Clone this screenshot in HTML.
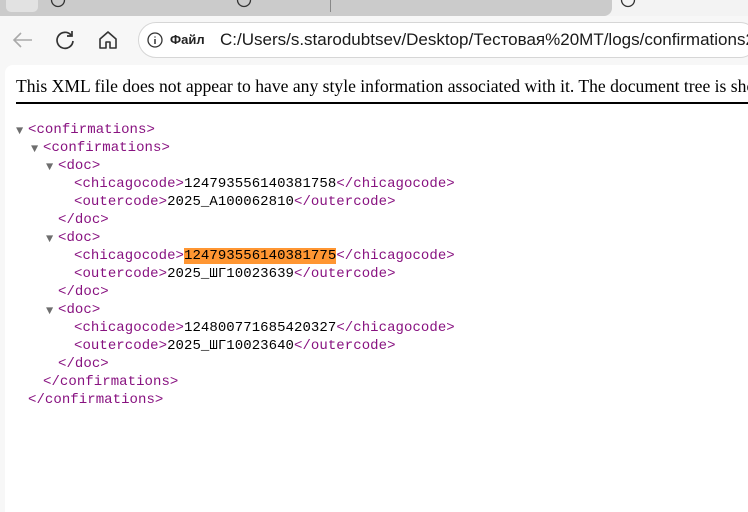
<!DOCTYPE html>
<html><head><meta charset="utf-8"><style>
*{margin:0;padding:0;box-sizing:border-box}
html,body{width:748px;height:512px;overflow:hidden}
body{background:#f7f7f7;font-family:"Liberation Sans","Noto Sans CJK SC",sans-serif;position:relative}
#wrap{position:absolute;left:0;top:0;width:748px;height:512px;overflow:hidden}
.strip{position:absolute;left:0;top:0;width:748px;height:16px;background:#f3f3f3}
.gray{position:absolute;left:0;top:0;width:612px;height:16px;background:#cbcbcb;border-radius:0 0 8px 0}
.small{position:absolute;left:6px;top:0;width:32px;height:12px;background:#e2e2e2;border-radius:0 0 5px 5px}
.addr{position:absolute;left:138px;top:22px;width:620px;height:36px;background:#fff;border:1px solid #d6d6d6;border-radius:18px}
.url{position:absolute;left:220px;top:30px;font-size:17px;color:#1a1a1a;white-space:nowrap}
.file{position:absolute;left:170px;top:32px;font-size:13px;color:#222;font-weight:bold}
.content{position:absolute;left:5px;top:65px;width:743px;height:447px;background:#fff;border-radius:8px 0 0 0}
.hdr{position:absolute;left:16px;top:76px;width:732px;overflow:hidden;font-family:"Liberation Serif",serif;font-size:17.6px;white-space:nowrap;color:#000}
.rule{position:absolute;left:16px;top:102px;width:732px;height:2px;background:#000}
.xml{position:absolute;left:0;top:121px;width:748px;font-family:"Liberation Mono",monospace;font-size:14px;letter-spacing:0.06px;line-height:18px;color:#000}
.l{position:relative;height:18px;white-space:pre}
.l>span{position:absolute;top:0}
.t{color:#881280}
.l>.tri{color:#6e6e6e;font-size:12px;top:1px}
.hl{background:#ff9632}
</style></head><body><div id="wrap">
<div class="strip"></div><div class="gray"></div><div class="small"></div>
<svg style="position:absolute;left:50px;top:-8px" width="16" height="16"><circle cx="8" cy="8" r="6.5" fill="none" stroke="#333" stroke-width="1.3"/></svg>
<svg style="position:absolute;left:236px;top:-8px" width="16" height="16"><circle cx="8" cy="8" r="6.5" fill="none" stroke="#333" stroke-width="1.3"/></svg>
<div style="position:absolute;left:330px;top:0;width:1px;height:12px;background:#888"></div>
<svg style="position:absolute;left:620px;top:-8px" width="16" height="16"><circle cx="8" cy="8" r="6.5" fill="none" stroke="#333" stroke-width="1.3"/></svg>
<svg style="position:absolute;left:10px;top:28px" width="26" height="24"><path d="M22 12H4M11 5L4 12L11 19" fill="none" stroke="#aaa" stroke-width="1.6"/></svg>
<svg style="position:absolute;left:53px;top:28px" width="24" height="24"><path d="M18 7A8 8 0 1 0 20 13M19 3V8H14" fill="none" stroke="#333" stroke-width="1.7"/></svg>
<svg style="position:absolute;left:96px;top:28px" width="24" height="24"><path d="M4 11L12 4L20 11V20H14V14H10V20H4Z" fill="none" stroke="#333" stroke-width="1.6" stroke-linejoin="round"/></svg>
<div class="addr"></div>
<svg style="position:absolute;left:146px;top:31px" width="18" height="18"><circle cx="9" cy="9" r="7" fill="none" stroke="#333" stroke-width="1.3"/><path d="M9 8V13M9 5.5V6.5" stroke="#333" stroke-width="1.5"/></svg>
<div class="file">Файл</div>
<div class="url">C:/Users/s.starodubtsev/Desktop/Тестовая%20MT/logs/confirmations20</div>
<div class="content"></div>
<div class="hdr">This XML file does not appear to have any style information associated with it. The document tree is shown below.</div>
<div class="rule"></div>
<div class="xml"><div class="l"><span class="tri" style="left:16px">▼</span><span style="left:28px"><span class="t">&lt;confirmations&gt;</span></span></div><div class="l"><span class="tri" style="left:31px">▼</span><span style="left:43px"><span class="t">&lt;confirmations&gt;</span></span></div><div class="l"><span class="tri" style="left:46px">▼</span><span style="left:58px"><span class="t">&lt;doc&gt;</span></span></div><div class="l"><span style="left:74px"><span class="t">&lt;chicagocode&gt;</span>124793556140381758<span class="t">&lt;/chicagocode&gt;</span></span></div><div class="l"><span style="left:74px"><span class="t">&lt;outercode&gt;</span>2025_А100062810<span class="t">&lt;/outercode&gt;</span></span></div><div class="l"><span style="left:58px"><span class="t">&lt;/doc&gt;</span></span></div><div class="l"><span class="tri" style="left:46px">▼</span><span style="left:58px"><span class="t">&lt;doc&gt;</span></span></div><div class="l"><span style="left:74px"><span class="t">&lt;chicagocode&gt;</span><span class="hl">124793556140381775</span><span class="t">&lt;/chicagocode&gt;</span></span></div><div class="l"><span style="left:74px"><span class="t">&lt;outercode&gt;</span>2025_ШГ10023639<span class="t">&lt;/outercode&gt;</span></span></div><div class="l"><span style="left:58px"><span class="t">&lt;/doc&gt;</span></span></div><div class="l"><span class="tri" style="left:46px">▼</span><span style="left:58px"><span class="t">&lt;doc&gt;</span></span></div><div class="l"><span style="left:74px"><span class="t">&lt;chicagocode&gt;</span>124800771685420327<span class="t">&lt;/chicagocode&gt;</span></span></div><div class="l"><span style="left:74px"><span class="t">&lt;outercode&gt;</span>2025_ШГ10023640<span class="t">&lt;/outercode&gt;</span></span></div><div class="l"><span style="left:58px"><span class="t">&lt;/doc&gt;</span></span></div><div class="l"><span style="left:43px"><span class="t">&lt;/confirmations&gt;</span></span></div><div class="l"><span style="left:28px"><span class="t">&lt;/confirmations&gt;</span></span></div></div>
</div></body></html>
